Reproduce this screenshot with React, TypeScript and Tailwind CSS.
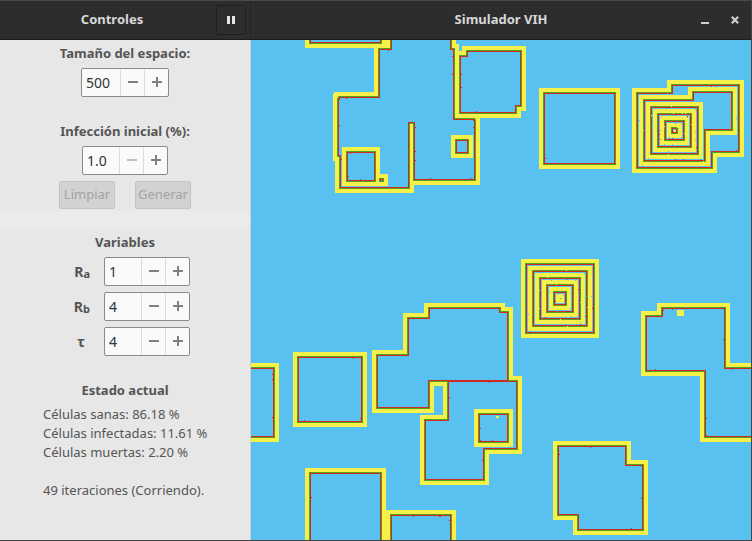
import { useState } from "react";

type Point = [number, number];
type Layer = { shapes: string[]; patches?: string };

const COLORS = {
  healthy: "#59c1f0",
  wave: "#f6f04a",
  trail: "#4fa31f",
  front: "#d02a23",
};

const box = (x1: number, y1: number, x2: number, y2: number) =>
  `M${x1} ${y1}H${x2}V${y2}H${x1}Z`;

// Each layer is painted over the previous one: wave, trail, front, then the healthy interior.
const LAYERS: Layer[] = [
  {
    shapes: [
      box(311, 20, 380, 42),
      "M392 20V50H380V98H340V100H339V155H341V187H408V122H415V179H474V121H473V120H453V50H450V20Z",
      "M468 52H520V105H515V112H461V57H468Z",
      box(545, 94, 614, 163),
      "M638 94H673V86H738V151H711V167H638Z",
      box(527, 265, 593, 332),
      "M647 317H663V309H724V369H770V436H706V370H647Z",
      box(230, 369, 273, 436),
      box(299, 358, 361, 421),
      "M378 356H409V319H430V309H499V313H507V380H428V407H378Z",
      "M449 382H516V448H483V479H426V421H449Z",
      box(311, 474, 380, 560),
      box(392, 516, 450, 560),
      "M559 447H625V466H642V529H579V514H559Z",
    ],
  },
  {
    shapes: [
      box(348, 153, 374, 180),
      box(457, 141, 467, 152),
      box(480, 415, 507, 441),
      "M645 101H694V93H731V129H704V160H645Z",
      box(534, 272, 586, 325),
    ],
    patches: "M380 174h8v12h-8z",
  },
  { shapes: [box(652, 108, 697, 153), box(541, 279, 579, 318)] },
  { shapes: [box(659, 115, 690, 146), box(548, 286, 572, 311)] },
  { shapes: [box(666, 122, 683, 139), box(555, 293, 565, 304)] },
];

const CORES = "M667 123h15v15h-15zM556 294h8v9h-8zM496 416h3v2h-3zM677 310h7v6h-7z";

const RED_CELLS: Point[] = [
  [388, 50], [346, 98], [339, 125], [341, 159], [350, 153], [348, 176], [360, 179],
  [415, 127], [415, 151], [415, 160], [430, 178], [470, 178], [473, 127], [452, 56],
  [452, 74], [461, 74], [461, 87], [476, 111], [545, 158], [711, 86], [736, 150],
  [675, 159], [683, 159], [659, 134], [696, 147], [687, 116], [672, 138], [272, 374],
  [272, 379], [272, 417], [353, 358], [304, 420], [360, 418], [480, 428], [480, 440],
  [492, 440], [489, 382], [449, 397], [482, 460], [311, 497], [413, 516], [439, 516],
  [440, 516], [449, 520], [590, 447], [559, 454], [641, 498], [631, 528], [672, 309],
  [663, 310], [723, 339], [731, 369], [655, 369], [706, 418], [706, 435], [339, 98],
  [566, 279], [578, 289], [585, 316], [580, 324], [545, 317], [555, 301], [592, 308],
];

const BLUE_CELLS: Point[] = [
  [639, 120], [667, 93], [716, 87], [736, 118], [648, 158], [642, 165], [700, 158],
  [668, 151], [695, 131], [695, 140], [674, 123], [676, 123], [681, 123], [659, 137],
  [664, 144], [672, 144], [660, 130], [669, 137], [681, 137], [678, 128], [695, 109],
  [687, 117], [661, 117], [528, 314], [530, 330], [591, 296], [551, 280], [575, 280],
  [577, 281], [571, 316], [577, 316], [542, 317], [549, 291], [558, 294], [563, 295],
  [570, 293], [570, 308], [560, 310], [584, 273], [580, 322], [510, 446],
];

const YELLOW_CELLS: Point[] = [
  [671, 106], [651, 115], [643, 130], [668, 154], [703, 161], [673, 113], [682, 113],
  [685, 113], [691, 124], [684, 133], [664, 126], [566, 270], [547, 277], [539, 290],
  [539, 308], [556, 284], [580, 302], [587, 307], [567, 326], [560, 319],
];

const GREEN_CELLS: Point[] = [
  [731, 115], [731, 128], [651, 127], [660, 139], [669, 114], [565, 278], [586, 296],
  [557, 311], [560, 298],
];

const cells = (points: Point[]) => points.map(([x, y]) => `M${x} ${y}h1v1h-1z`).join("");

function Simulation() {
  return (
    <svg
      viewBox="251 40 500 500"
      shapeRendering="crispEdges"
      role="img"
      aria-label="Simulación"
      className="block h-auto w-full bg-[#59c1f0]"
    >
      {LAYERS.map((layer, i) => {
        const d = layer.shapes.join("");
        return (
          <g key={i}>
            <path d={d} fill="none" stroke={COLORS.wave} strokeWidth={12} strokeMiterlimit={10} />
            {layer.patches && <path d={layer.patches} fill={COLORS.wave} />}
            <path d={d} fill="none" stroke={COLORS.trail} strokeWidth={4} />
            <path d={d} fill="none" stroke={COLORS.front} strokeWidth={2} />
            <path d={d} fill={COLORS.healthy} />
          </g>
        );
      })}
      <path d={CORES} fill={COLORS.wave} />
      <path d="M379 178h5v4h-5zM671 127h6v1h1v6h-7z" fill={COLORS.trail} />
      <path d="M380 179h3v2h-3zM672 128h4v1h1v4h-5z" fill={COLORS.front} />
      <path d="M381 180h1v1h-1zM673 129h3v3h-3z" fill={COLORS.healthy} />
      <path d="M674 130h2v2h-2z" fill={COLORS.wave} />
      <path d={cells(RED_CELLS)} fill={COLORS.front} />
      <path d={cells(BLUE_CELLS)} fill={COLORS.healthy} />
      <path d={cells(YELLOW_CELLS)} fill={COLORS.wave} />
      <path d={cells(GREEN_CELLS)} fill={COLORS.trail} />
    </svg>
  );
}

type SpinProps = {
  id: string;
  initial: number;
  digits?: number;
  min?: number;
  step?: number;
  wide?: boolean;
};

function SpinBox({ id, initial, digits = 0, min = 0, step = 1, wide }: SpinProps) {
  const [value, setValue] = useState(initial);
  const button =
    "flex w-6 items-center justify-center border-l border-[#dcdcdc] text-[#808080] disabled:text-[#c0c0c0]";
  return (
    <div
      className={`flex h-[29px] rounded-xs border border-[#8b8b8b] bg-[#fafafa] ${wide ? "w-[88px]" : "w-[86px]"}`}
    >
      <input
        id={id}
        inputMode="decimal"
        value={value.toFixed(digits)}
        onChange={(e) => setValue(Number(e.target.value) || 0)}
        className="w-0 min-w-0 flex-1 bg-transparent pl-1 text-sm text-[#2e3436] outline-none"
      />
      <button
        type="button"
        aria-label="Disminuir"
        disabled={value <= min}
        onClick={() => setValue(value - step)}
        className={button}
      >
        <svg viewBox="0 0 10 10" className="mb-0.5 size-[10px]" shapeRendering="crispEdges">
          <path d="M0 4h10v2H0z" fill="currentColor" />
        </svg>
      </button>
      <button
        type="button"
        aria-label="Aumentar"
        onClick={() => setValue(value + step)}
        className={button}
      >
        <svg viewBox="0 0 10 10" className="mb-0.5 size-[10px]" shapeRendering="crispEdges">
          <path d="M0 4h10v2H0zM4 0h2v10H4z" fill="currentColor" />
        </svg>
      </button>
    </div>
  );
}

function ActionButton({ children }: { children: string }) {
  return (
    <button
      type="button"
      disabled
      className="h-7 w-14 rounded-xs border border-[#c4c4c4] bg-[#d2d2d2] text-[13px] text-[#a3a3a3]"
    >
      {children}
    </button>
  );
}

function Controls() {
  return (
    <aside className="flex w-[251px] shrink-0 flex-col border-r border-[#d0d0d0] bg-[#e7e7e7] text-[#555555]">
      <section className="flex flex-col items-center pt-[3px]">
        <label htmlFor="size" className="mb-[5px] text-[13px] leading-5 font-bold">
          Tamaño del espacio:
        </label>
        <SpinBox id="size" initial={500} wide />
        <label htmlFor="infection" className="mt-6 mb-[5px] text-[13px] leading-5 font-bold">
          Infección inicial (%):
        </label>
        <SpinBox id="infection" initial={1} min={1} digits={1} step={0.1} />
        <div className="mt-1.5 flex gap-5">
          <ActionButton>Limpiar</ActionButton>
          <ActionButton>Generar</ActionButton>
        </div>
      </section>
      <div className="mt-0.5 h-[18px] bg-[#ebebeb]" />
      <section className="flex flex-col items-center pt-[3px]">
        <h2 className="mb-[5px] text-[13px] leading-5 font-bold">Variables</h2>
        <div className="grid grid-cols-[18px_86px] items-center gap-x-3.5 gap-y-1.5 pl-3">
          <label htmlFor="ra" className="flex justify-end text-sm font-bold">
            R<sub className="text-[11px] leading-5">a</sub>
          </label>
          <SpinBox id="ra" initial={1} />
          <label htmlFor="rb" className="flex justify-end text-sm font-bold">
            R<sub className="text-[11px] leading-5">b</sub>
          </label>
          <SpinBox id="rb" initial={4} />
          <label htmlFor="tau" className="text-center text-sm font-bold">
            τ
          </label>
          <SpinBox id="tau" initial={4} />
        </div>
      </section>
      <section className="pt-6">
        <h2 className="text-center text-[13px] leading-5 font-bold">Estado actual</h2>
        <div className="mt-[5px] pl-[43px] text-[13px] leading-[19px]">
          <p>Células sanas: 86.18 %</p>
          <p>Células infectadas: 11.61 %</p>
          <p>Células muertas: 2.20 %</p>
          <p className="mt-[19px]">49 iteraciones (Corriendo).</p>
        </div>
      </section>
    </aside>
  );
}

export default function App() {
  return (
    <div className="flex flex-col border-r border-b border-[#444444] bg-[#e7e7e7] font-['Noto_Sans','Open_Sans',sans-serif]">
      <header className="flex h-10 border-t border-b border-t-[#4a4a4a] border-b-[#1c1c1c] bg-[#2d2d2d] text-[13px] font-bold text-[#d8d8d8]">
        <div className="flex w-[251px] shrink-0 items-center border-r border-[#262626] pr-1">
          <h1 className="flex-1 pl-2 text-center">Controles</h1>
          <button
            type="button"
            aria-label="Pausar"
            className="flex size-[30px] items-center justify-center rounded-xs border border-[#1f1f1f]"
          >
            <svg viewBox="0 0 8 8" className="size-2" shapeRendering="crispEdges">
              <path d="M0 0h3v8H0zM5 0h3v8H5z" fill="#e4e4e4" />
            </svg>
          </button>
        </div>
        <div className="grid flex-1 grid-cols-[1fr_auto_1fr] items-center">
          <h1 className="col-start-2 text-center">Simulador VIH</h1>
          <div className="flex justify-end gap-2.5 pr-1.5">
            <button type="button" aria-label="Minimizar" className="flex size-5 items-center justify-center">
              <svg viewBox="0 0 8 8" className="size-2" shapeRendering="crispEdges">
                <path d="M0 6h8v2H0z" fill="#cfcfcf" />
              </svg>
            </button>
            <button type="button" aria-label="Cerrar" className="flex size-5 items-center justify-center">
              <svg viewBox="0 0 8 8" className="size-2">
                <path d="M0.8 0.8l6.4 6.4M7.2 0.8l-6.4 6.4" stroke="#cfcfcf" strokeWidth="2.2" />
              </svg>
            </button>
          </div>
        </div>
      </header>
      <main className="flex">
        <Controls />
        <div className="min-w-0 flex-1">
          <Simulation />
        </div>
      </main>
    </div>
  );
}
